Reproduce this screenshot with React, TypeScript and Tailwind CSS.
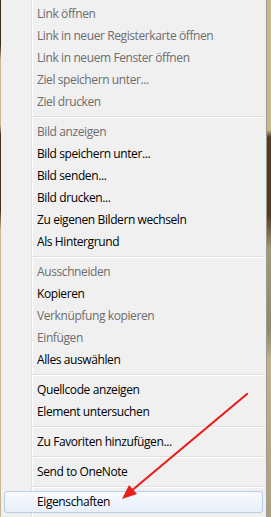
import React from "react";

type Item = { label: string; disabled?: boolean; active?: boolean };

const groups: Item[][] = [
  [
    { label: "Link öffnen", disabled: true },
    { label: "Link in neuer Registerkarte öffnen", disabled: true },
    { label: "Link in neuem Fenster öffnen", disabled: true },
    { label: "Ziel speichern unter...", disabled: true },
    { label: "Ziel drucken", disabled: true },
  ],
  [
    { label: "Bild anzeigen", disabled: true },
    { label: "Bild speichern unter..." },
    { label: "Bild senden..." },
    { label: "Bild drucken..." },
    { label: "Zu eigenen Bildern wechseln" },
    { label: "Als Hintergrund" },
  ],
  [
    { label: "Ausschneiden", disabled: true },
    { label: "Kopieren" },
    { label: "Verknüpfung kopieren", disabled: true },
    { label: "Einfügen", disabled: true },
    { label: "Alles auswählen" },
  ],
  [{ label: "Quellcode anzeigen" }, { label: "Element untersuchen" }],
  [{ label: "Zu Favoriten hinzufügen..." }],
  [{ label: "Send to OneNote" }],
  [{ label: "Eigenschaften", active: true }],
];

function MenuRow({ item }: { item: Item }) {
  if (item.active) {
    return (
      <div className="mx-[3px] flex h-[22px] items-center rounded-[3px] border border-[#b9cde6] bg-[linear-gradient(to_bottom,#f7fafe,#e9f0fa)] pl-[32px] text-black">
        {item.label}
      </div>
    );
  }
  return (
    <div
      className={
        "flex h-[22px] items-center pl-[36px] " +
        (item.disabled ? "text-[#6d6d6d]" : "text-black")
      }
    >
      {item.label}
    </div>
  );
}

function Separator() {
  return (
    <div className="flex h-[8px] flex-col justify-center pl-[31px] pr-[2px]">
      <div className="h-px bg-[#e0e0e0]" />
      <div className="h-px bg-white" />
    </div>
  );
}

export default function App() {
  return (
    <div className="relative flex h-[517px] w-[271px] overflow-hidden bg-[linear-gradient(to_bottom,#cdb978_0px,#cdb978_130px,#5b3a1c_137px,#5b3a1c_215px,#a59a6c_250px,#8f8862_330px,#c2b27c_360px,#b0a070_517px)] font-['Open_Sans',sans-serif] text-[12px]">
      <div className="w-[1px] shrink-0 bg-[linear-gradient(to_bottom,#3a2e20_0px,#3a2e20_45px,#c9b891_60px,#c9b891_125px,#4b3018_135px,#4b3018_210px,#c7b68e_230px,#c7b68e_517px)]" />
      <div className="h-[540px] w-[266px] shrink-0 border-r border-[#9a9a9a] bg-[#f0f0f0] bg-[linear-gradient(to_right,#f0f0f0_30px,#e2e3e3_30px,#e2e3e3_31px,#ffffff_31px,#ffffff_32px,#f0f0f0_32px)] pt-[3px] tracking-[-0.4px]">
        {groups.map((group, gi) => (
          <div key={gi}>
            {gi > 0 && <Separator />}
            {group.map((item) => (
              <MenuRow key={item.label} item={item} />
            ))}
          </div>
        ))}
      </div>
      <svg
        className="pointer-events-none absolute left-0 top-0"
        width="271"
        height="517"
        viewBox="0 0 271 517"
      >
        <line x1="247" y1="394" x2="130" y2="492" stroke="#e8201c" strokeWidth="2.2" strokeLinecap="round" />
        <polygon points="122,499 129,485 137,494" fill="#e8201c" />
      </svg>
    </div>
  );
}
